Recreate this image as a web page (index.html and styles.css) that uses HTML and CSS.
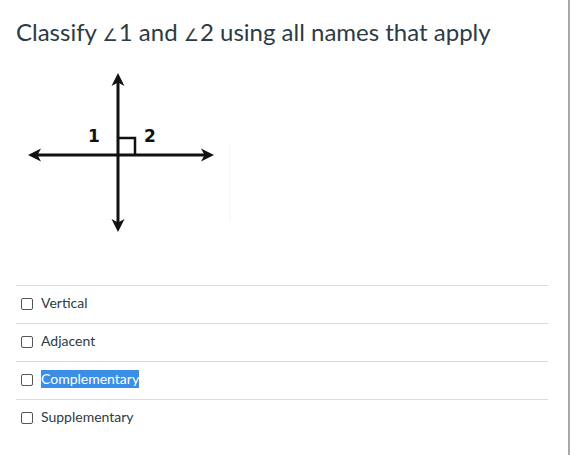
FILE: index.html
```html
<!DOCTYPE html>
<html>
<head>
<meta charset="utf-8">
<link rel="stylesheet" href="styles.css">
</head>
<body>
<div class="page">
  <h1 class="title">Classify <span class="ang">∠</span>1 and <span class="ang">∠</span>2 using all names that apply</h1>
  <svg class="diagram" width="220" height="170" viewBox="16 68 220 170" xmlns="http://www.w3.org/2000/svg">
    <g stroke="#111" stroke-width="3" fill="none">
      <line x1="32" y1="155" x2="210" y2="155"/>
      <line x1="118" y1="77" x2="118" y2="228"/>
      <path d="M118 138 H135 V155" stroke-width="2.5"/>
    </g>
    <g fill="#111">
      <path d="M28 155 L41 148.5 L37.5 155 L41 161.5 Z"/>
      <path d="M214 155 L201 148.5 L204.5 155 L201 161.5 Z"/>
      <path d="M118 73 L111.5 86 L118 82.5 L124.5 86 Z"/>
      <path d="M118 232 L111.5 219 L118 222.5 L124.5 219 Z"/>
    </g>
    <line x1="230" y1="145" x2="230" y2="222" stroke="#f3f3f3" stroke-width="1"/>
    <text x="94" y="142" class="lbl" text-anchor="middle">1</text>
    <text x="150" y="142" class="lbl" text-anchor="middle">2</text>
  </svg>
  <ul class="options">
    <li class="opt"><span class="box"></span><span class="txt">Vertical</span></li>
    <li class="opt"><span class="box"></span><span class="txt">Adjacent</span></li>
    <li class="opt"><span class="box"></span><span class="txt sel">Complementary</span></li>
    <li class="opt"><span class="box"></span><span class="txt">Supplementary</span></li>
  </ul>
</div>
</body>
</html>
```
FILE: styles.css
```css
html, body {
  margin: 0;
  padding: 0;
  background: #fff;
}
body {
  font-family: Lato, "Liberation Sans", sans-serif;
  color: #2d3b45;
}
.page {
  width: 552px;
  height: 455px;
  padding-left: 16px;
  border-right: 2px solid #a9a9a9;
  box-sizing: content-box;
  overflow: hidden;
}
.title {
  margin: 0;
  padding-top: 16px;
  font-size: 24px;
  font-weight: 400;
  line-height: 32px;
  height: 32px;
  letter-spacing: 0;
}
.ang {
  font-family: "DejaVu Sans", sans-serif;
  font-size: 17px;
  margin-right: 1px;
}
.diagram {
  display: block;
  margin-top: 20px;
}
.lbl {
  font-family: "DejaVu Sans", sans-serif;
  font-weight: bold;
  font-size: 17px;
  fill: #111;
}
.options {
  list-style: none;
  margin: 47px 0 0 0;
  padding: 0;
  width: 532px;
}
.opt {
  display: flex;
  align-items: center;
  height: 33px;
  border-top: 1px solid #dcdcdc;
  padding-left: 5px;
  padding-bottom: 4px;
}
.box {
  width: 10px;
  height: 10px;
  border: 1px solid #555;
  border-radius: 2px;
  margin-right: 8px;
  margin-top: 3px;
}
.txt {
  font-size: 14px;
  line-height: 18px;
}
.sel {
  background: #3a8ee6;
  color: #fff;
}
```
